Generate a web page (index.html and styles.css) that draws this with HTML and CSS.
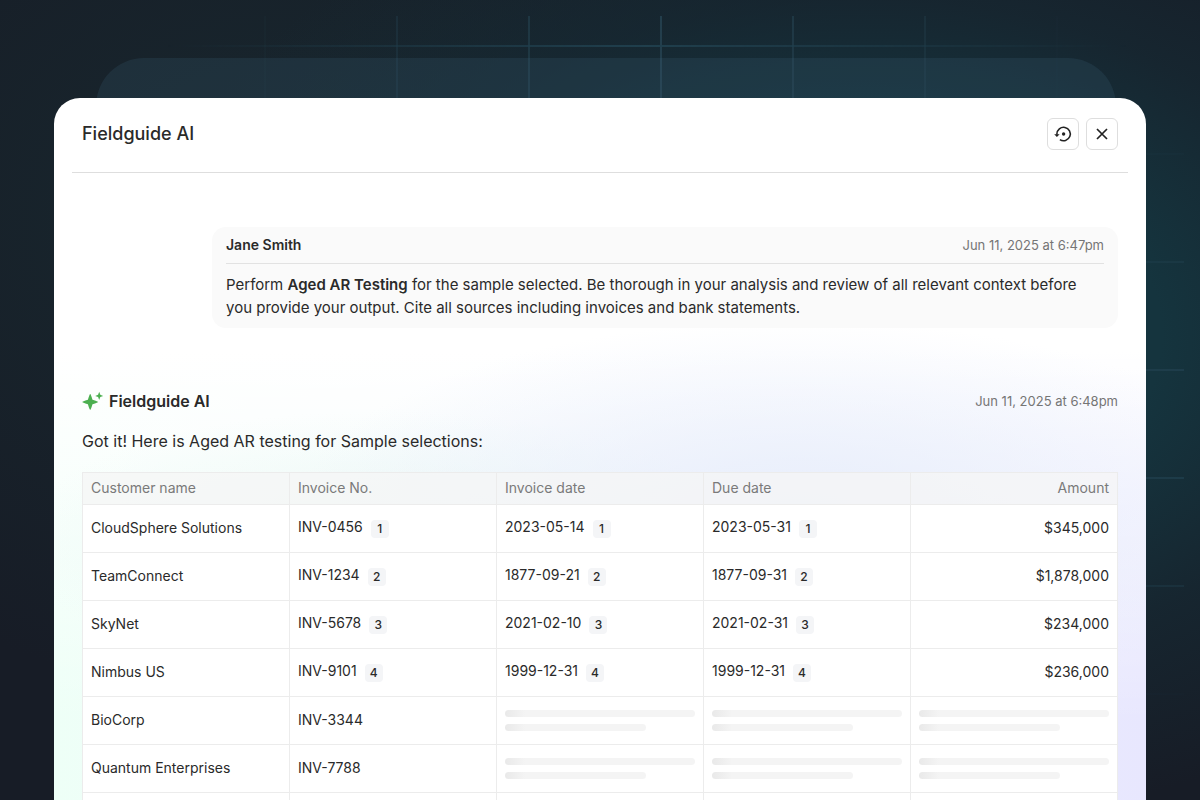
FILE: index.html
```html
<!DOCTYPE html>
<html lang="en">
<head>
<meta charset="utf-8">
<meta name="viewport" content="width=device-width, initial-scale=1">
<title>Fieldguide AI</title>
<link rel="stylesheet" href="styles.css">
</head>
<body>
<div class="stage">
  <div class="grid-lines grid-vertical"></div>
  <div class="grid-lines grid-horizontal"></div>
  <div class="back-panel"></div>
  <main class="panel">
    <header class="panel-header">
      <h1 class="panel-title">Fieldguide AI</h1>
      <div class="actions">
        <button class="icon-button" type="button" aria-label="History">
          <svg width="20" height="20" viewBox="0 0 20 20" fill="none" stroke="currentColor" stroke-width="1.6">
            <path d="M3.900 10.700V10a6.700 6.700 0 1 1 3 5.600"/>
            <path d="M1.200 10.200h5.400L3.900 12.900z" fill="currentColor" stroke="none"/>
            <circle cx="10.600" cy="10" r="1.700" fill="currentColor" stroke="none"/>
          </svg>
        </button>
        <button class="icon-button" type="button" aria-label="Close">
          <svg width="20" height="20" viewBox="0 0 20 20" fill="none" stroke="currentColor" stroke-width="1.7">
            <path d="M5 5l10 10M15 5L5 15"/>
          </svg>
        </button>
      </div>
    </header>

    <section class="conversation">
      <article class="prompt">
        <div class="prompt-head">
          <h2 class="author">Jane Smith</h2>
          <time class="date" datetime="2025-06-11T18:47">Jun 11, 2025 at 6:47pm</time>
        </div>
        <p class="prompt-text">Perform <strong>Aged AR Testing</strong> for the sample selected. Be thorough in your analysis and review of all relevant context before you provide your output. Cite all sources including invoices and bank statements.</p>
      </article>

      <article class="reply">
        <div class="reply-head">
          <svg class="sparkle" width="22" height="20" viewBox="0 0 22 20" fill="#4caf50">
            <path d="M8.200 3Q8.800 3 10.500 8.700Q16.200 10.400 16.200 11Q16.200 11.600 10.500 13.300Q8.800 19 8.200 19Q7.600 19 5.900 13.300Q.2 11.600 .2 11Q.2 10.400 5.900 8.700Q7.600 3 8.200 3Z"/>
            <path d="M17.200 .8L18.300 3.800L21.200 4.900L18.300 6L17.200 9L16.100 6L13.200 4.900L16.100 3.800Z"/>
          </svg>
          <h2 class="reply-author">Fieldguide AI</h2>
          <time class="date" datetime="2025-06-11T18:48">Jun 11, 2025 at 6:48pm</time>
        </div>
        <p class="reply-text">Got it! Here is Aged AR testing for Sample selections:</p>
        <table class="invoices">
          <thead>
            <tr><th>Customer name</th><th>Invoice No.</th><th>Invoice date</th><th>Due date</th><th class="amount">Amount</th></tr>
          </thead>
          <tbody>
            <tr><td>CloudSphere Solutions</td><td>INV-0456<span class="cite">1</span></td><td>2023-05-14<span class="cite">1</span></td><td>2023-05-31<span class="cite">1</span></td><td class="amount">$345,000</td></tr>
            <tr><td>TeamConnect</td><td>INV-1234<span class="cite">2</span></td><td>1877-09-21<span class="cite">2</span></td><td>1877-09-31<span class="cite">2</span></td><td class="amount">$1,878,000</td></tr>
            <tr><td>SkyNet</td><td>INV-5678<span class="cite">3</span></td><td>2021-02-10<span class="cite">3</span></td><td>2021-02-31<span class="cite">3</span></td><td class="amount">$234,000</td></tr>
            <tr><td>Nimbus US</td><td>INV-9101<span class="cite">4</span></td><td>1999-12-31<span class="cite">4</span></td><td>1999-12-31<span class="cite">4</span></td><td class="amount">$236,000</td></tr>
            <tr><td>BioCorp</td><td>INV-3344</td><td><div class="loading"><i></i><i></i></div></td><td><div class="loading"><i></i><i></i></div></td><td><div class="loading"><i></i><i></i></div></td></tr>
            <tr><td>Quantum Enterprises</td><td>INV-7788</td><td><div class="loading"><i></i><i></i></div></td><td><div class="loading"><i></i><i></i></div></td><td><div class="loading"><i></i><i></i></div></td></tr>
            <tr><td></td><td></td><td></td><td></td><td></td></tr>
          </tbody>
        </table>
      </article>
    </section>
  </main>
</div>
</body>
</html>
```
FILE: styles.css
```css
* { box-sizing: border-box; }

body {
  margin: 0;
  font-family: Inter, "Liberation Sans", sans-serif;
  color: #2a2a2a;
}

h1, h2, p { margin: 0; }

.stage {
  position: relative;
  height: 100vh;
  overflow: hidden;
  padding: 98px 54px 0;
  background:
    radial-gradient(ellipse 62% 62% at 72% 42%, #15343f 0%, #15343e 40%, rgba(22, 44, 54, 0.6) 68%, rgba(23, 30, 40, 0) 100%),
    radial-gradient(ellipse 50% 60% at 24% 28%, #18282f, rgba(24, 30, 40, 0)),
    #171c26;
}

.grid-lines { position: absolute; }

.grid-vertical {
  inset: 16px 0 0 132px;
  background: repeating-linear-gradient(90deg, #233f4d 0 2px, transparent 2px 132px);
  mask-image: linear-gradient(90deg, transparent 8%, #000 50%, transparent 90%);
}

.grid-horizontal {
  inset: 45px 16px 0;
  background: repeating-linear-gradient(180deg, #203f4d 0 2px, transparent 2px 108px);
  mask-image:
    radial-gradient(ellipse 480px 180px at 54% 0, #000, transparent),
    radial-gradient(ellipse 300px 300px at 100% 49%, #000, transparent);
}

.back-panel {
  position: absolute;
  inset: 58px 84px 0 96px;
  border-radius: 48px 48px 0 0;
  background: rgba(60, 96, 120, 0.22);
}

.panel {
  position: relative;
  min-height: 100%;
  padding: 0 18px;
  border-radius: 26px 26px 0 0;
  background:
    radial-gradient(ellipse 46% 26% at 68% 56%, #e7edfb, rgba(231, 237, 251, 0)),
    radial-gradient(ellipse 34% 18% at 30% 60%, #ebf9f5, rgba(235, 249, 245, 0)),
    linear-gradient(180deg, #fff 34%, rgba(255, 255, 255, 0) 84%),
    linear-gradient(90deg, #eefff7 0%, #effbf9 18%, #eef6fc 48%, #e9edfd 78%, #e8e7fe 100%);
}

.panel-header {
  display: flex;
  align-items: center;
  justify-content: space-between;
  height: 75px;
  padding: 0 10px 3px;
  border-bottom: 1px solid #dedede;
}

.panel-title {
  font-size: 18px;
  font-weight: 500;
  line-height: 24px;
}

.actions { display: flex; gap: 7px; }

.icon-button {
  display: flex;
  align-items: center;
  justify-content: center;
  width: 32px;
  height: 32px;
  padding: 0;
  border: 1px solid #dedede;
  border-radius: 6px;
  background: #fff;
  color: #222;
}

.conversation { padding: 54px 10px 0; }

.prompt {
  margin-left: 130px;
  padding: 0 14px 9px;
  border-radius: 14px;
  background: #fafafa;
}

.prompt-head {
  display: flex;
  align-items: center;
  justify-content: space-between;
  height: 37px;
  border-bottom: 1px solid #e2e2e2;
}

.author {
  font-size: 14px;
  font-weight: 600;
  line-height: 16px;
}

.date {
  font-size: 13px;
  font-weight: 400;
  line-height: 16px;
  color: #757575;
}

.prompt-text {
  padding-top: 9px;
  font-size: 15px;
  line-height: 23px;
}

.prompt-text strong { font-weight: 600; }

.reply { padding-top: 61px; }

.reply-head {
  display: flex;
  align-items: center;
  height: 24px;
}

.reply-author {
  flex: 1;
  margin-left: 5px;
  font-size: 16px;
  font-weight: 600;
}

.reply-text {
  padding: 16px 0 19px;
  font-size: 16px;
  line-height: 24px;
}

.invoices {
  width: 100%;
  table-layout: fixed;
  border-collapse: collapse;
  font-size: 14px;
  line-height: 20px;
}

.invoices th,
.invoices td {
  padding: 0 8px 2px;
  border: 1px solid #ececec;
  text-align: left;
  white-space: nowrap;
}

.invoices th {
  height: 32px;
  background: rgba(245, 245, 245, 0.75);
  font-weight: 400;
  color: #7a7a7a;
}

.invoices td {
  height: 48px;
  background: #fff;
}

.invoices .amount { text-align: right; }

.cite {
  display: inline-block;
  width: 18px;
  height: 18px;
  margin-left: 8px;
  border-radius: 4px;
  background: #f4f5f7;
  font-size: 12px;
  font-weight: 500;
  line-height: 18px;
  text-align: center;
  vertical-align: middle;
}

.loading {
  display: grid;
  gap: 7px;
  padding-top: 2px;
}

.loading i {
  height: 7px;
  border-radius: 4px;
  background: linear-gradient(90deg, #e9e9e9, #f4f4f4 20px);
}

.loading i:last-child { width: 74%; }
```
